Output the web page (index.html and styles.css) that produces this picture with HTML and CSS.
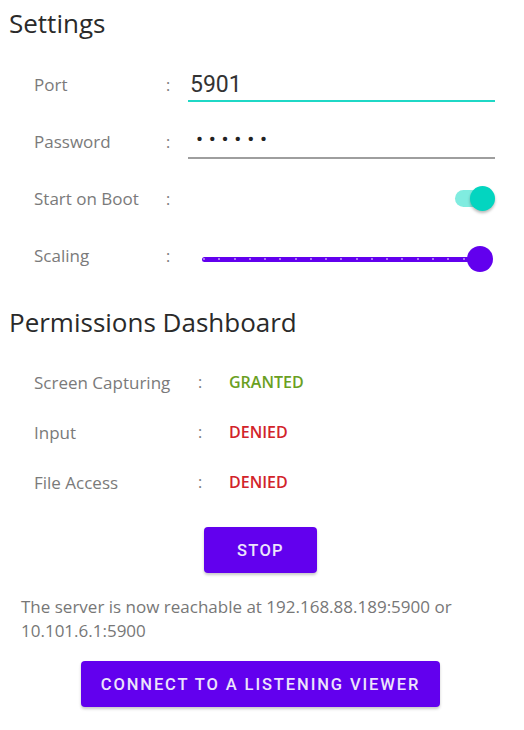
FILE: index.html
```html
<!DOCTYPE html>
<html>
<head>
<meta charset="utf-8">
<link rel="stylesheet" href="styles.css">
</head>
<body>
<div class="page">
  <h1 class="title">Settings</h1>
  <div class="form">
    <div class="label">Port</div><div class="colon">:</div>
    <div class="value"><div class="input focused"><span class="input-text">5901</span></div></div>

    <div class="label">Password</div><div class="colon">:</div>
    <div class="value"><div class="input"><span class="input-text dots">••••••</span></div></div>

    <div class="label">Start on Boot</div><div class="colon">:</div>
    <div class="value end"><div class="switch"><span class="switch-track"></span><span class="switch-thumb"></span></div></div>

    <div class="label">Scaling</div><div class="colon">:</div>
    <div class="value">
      <div class="slider">
        <div class="slider-track">
          <span class="tick"></span><span class="tick"></span><span class="tick"></span><span class="tick"></span><span class="tick"></span><span class="tick"></span><span class="tick"></span><span class="tick"></span><span class="tick"></span><span class="tick"></span><span class="tick"></span><span class="tick"></span><span class="tick"></span><span class="tick"></span><span class="tick"></span><span class="tick"></span><span class="tick"></span><span class="tick"></span><span class="tick"></span>
        </div>
        <span class="slider-thumb"></span>
      </div>
    </div>
  </div>

  <h1 class="title perm-title">Permissions Dashboard</h1>
  <div class="perms">
    <div class="label">Screen Capturing</div><div class="colon">:</div><div class="status granted">GRANTED</div>
    <div class="label">Input</div><div class="colon">:</div><div class="status denied">DENIED</div>
    <div class="label">File Access</div><div class="colon">:</div><div class="status denied">DENIED</div>
  </div>

  <div class="btn-row"><button class="btn stop">STOP</button></div>

  <p class="server">The server is now reachable at 192.168.88.189:5900 or 10.101.6.1:5900</p>

  <div class="btn-row"><button class="btn connect">CONNECT TO A LISTENING VIEWER</button></div>
</div>
</body>
</html>
```
FILE: styles.css
```css
html, body {
  margin: 0;
  padding: 0;
  background: #ffffff;
}
body {
  font-family: "Open Sans", Lato, sans-serif;
  color: #777777;
  width: 524px;
  height: 730px;
  overflow: hidden;
}
.page {
  display: flex;
  flex-direction: column;
}
.title {
  margin: 0;
  padding: 7px 9px 0;
  font-size: 26px;
  line-height: 32px;
  font-weight: 400;
  color: #2a2a2a;
  height: 32px;
}
.form {
  margin-top: 17px;
  display: grid;
  grid-template-columns: 132px 22px 1fr;
  grid-auto-rows: 57px;
  padding: 0 29px 0 34px;
  align-items: center;
}
.label {
  font-size: 17px;
  color: #7a7a7a;
}
.colon {
  font-size: 16px;
  color: #7a7a7a;
}
.value {
  align-self: stretch;
  display: flex;
  align-items: center;
}
.value.end {
  justify-content: flex-end;
}
.input {
  align-self: flex-start;
  width: 100%;
  height: 42px;
  border-bottom: 2px solid #9e9e9e;
  display: flex;
  align-items: flex-end;
  padding-bottom: 2px;
  box-sizing: content-box;
}
.input.focused {
  border-bottom-color: #1fd8c6;
}
.input-text {
  font-family: Roboto, sans-serif;
  font-size: 23px;
  line-height: 26px;
  color: #333333;
  padding-left: 2px;
}
.dots {
  font-size: 21px;
  letter-spacing: 5.7px;
  padding-left: 8px;
  margin-bottom: 3px;
  color: #222;
}
.switch {
  position: relative;
  width: 40px;
  height: 26px;
}
.switch-track {
  position: absolute;
  left: 0;
  top: 4px;
  width: 36px;
  height: 17px;
  border-radius: 9px;
  background: #80ece0;
}
.switch-thumb {
  position: absolute;
  right: 0;
  top: 0;
  width: 25px;
  height: 25px;
  border-radius: 50%;
  background: #03d5c0;
  box-shadow: 0 2px 3px rgba(0,0,0,0.28);
}
.slider {
  position: relative;
  margin-left: 14px;
  margin-top: 7px;
  width: 291px;
  height: 26px;
  display: flex;
  align-items: center;
}
.slider-track {
  width: 278px;
  height: 5px;
  border-radius: 3px;
  background: #6200ee;
  display: flex;
  justify-content: space-between;
  align-items: center;
}
.tick {
  width: 2px;
  height: 2px;
  border-radius: 50%;
  background: rgba(255,255,255,0.6);
}
.tick:first-child {
  margin-left: 1px;
}
.slider-thumb {
  position: absolute;
  right: 0;
  top: 0;
  width: 26px;
  height: 26px;
  border-radius: 50%;
  background: #6200ee;
}
.perm-title {
  margin-top: 22px;
  padding-top: 0;
}
.perms {
  margin-top: 19px;
  display: grid;
  grid-template-columns: 164px 31px 1fr;
  grid-auto-rows: 50px;
  padding: 0 29px 0 34px;
  align-items: center;
}
.status {
  font-size: 16px;
  font-weight: 600;
}
.granted { color: #6aa022; }
.denied { color: #d2232a; }
.btn-row {
  display: flex;
  justify-content: center;
  padding-right: 3px;
}
.btn {
  font-family: Roboto, sans-serif;
  font-weight: 500;
  font-size: 16.5px;
  letter-spacing: 1.9px;
  color: #ece4fb;
  background: #6200ee;
  border: none;
  border-radius: 4px;
  height: 46px;
  box-shadow: 0 2px 3px rgba(0,0,0,0.22);
  padding: 0;
}
.stop {
  margin-top: 20px;
  width: 113px;
  letter-spacing: 1.3px;
}
.server {
  margin: 22px 0 0;
  padding: 0 21px;
  font-size: 17px;
  line-height: 24px;
  color: #777777;
}
.connect {
  margin-top: 18px;
  width: 359px;
}
```
